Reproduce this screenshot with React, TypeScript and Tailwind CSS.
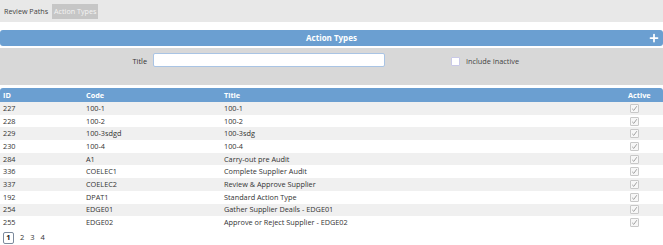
import { Plus } from 'lucide-react'

const rows = [
  { id: '227', code: '100-1', title: '100-1' },
  { id: '228', code: '100-2', title: '100-2' },
  { id: '229', code: '100-3sdgd', title: '100-3sdg' },
  { id: '230', code: '100-4', title: '100-4' },
  { id: '284', code: 'A1', title: 'Carry-out pre Audit' },
  { id: '336', code: 'COELEC1', title: 'Complete Supplier Audit' },
  { id: '337', code: 'COELEC2', title: 'Review & Approve Supplier' },
  { id: '192', code: 'DPAT1', title: 'Standard Action Type' },
  { id: '254', code: 'EDGE01', title: 'Gather Supplier Deails - EDGE01' },
  { id: '255', code: 'EDGE02', title: 'Approve or Reject Supplier - EDGE02' },
]

const CheckMark = () => (
  <div className="w-[9px] h-[9px] border border-[#c8c8c8] bg-[#f7f7f7] rounded-[1px] flex items-center justify-center">
    <svg width="7" height="7" viewBox="0 0 7 7">
      <path d="M1.2 3.8 L2.8 5.4 L5.8 1.2" stroke="#9a9a9a" strokeWidth="0.9" fill="none" />
    </svg>
  </div>
)

export default function App() {
  return (
    <div className="w-[663px] h-[245px] bg-white text-[7.3px] text-[#333] overflow-hidden" style={{ fontFamily: '"Open Sans", "Noto Sans", sans-serif' }}>
      {/* Tabs */}
      <div className="h-[22px] bg-[#e8e8e8] flex items-start pt-[4px] pl-[4px] gap-[3px] text-[7.2px]">
        <div className="h-[15px] flex items-center text-[#444]">Review Paths</div>
        <div className="h-[15px] px-[2px] ml-[1px] flex items-center bg-[#c6c6c6] text-[#f4f4f4]">Action Types</div>
      </div>

      {/* Section header */}
      <div className="mt-[8px] h-[16px] bg-[#6b9fd1] rounded-[3px] relative flex items-center justify-center">
        <span className="text-white font-bold text-[8px]">Action Types</span>
        <Plus className="absolute right-[3px] top-[2px] text-white" size={12} strokeWidth={3.5} />
      </div>

      {/* Filter panel */}
      <div className="mt-[2px] h-[37px] bg-[#d8d8d8] flex items-start pt-[5px]">
        <div className="w-[153px] text-right pr-[6px] pt-[3px] text-[#333]">Title</div>
        <div className="w-[232px] h-[14px] bg-white border border-[#a9c4e4] rounded-[2px]" />
        <div className="ml-[66px] mt-[3px] flex items-center">
          <div className="w-[9px] h-[9px] bg-white border border-[#c9c9e8] rounded-[1px]" />
          <span className="ml-[6px] text-[#444]">Include Inactive</span>
        </div>
      </div>

      {/* Table */}
      <div className="mt-[3px]">
        <div className="h-[14px] bg-[#6b9fd1] rounded-t-[3px] flex items-center text-white font-bold">
          <div className="w-[86px] pl-[3px]">ID</div>
          <div className="w-[138px]">Code</div>
          <div className="flex-1">Title</div>
          <div className="w-[35px]">Active</div>
        </div>
        {rows.map((r, i) => (
          <div key={r.id} className={`h-[12.7px] flex items-center ${i % 2 === 0 ? 'bg-[#f0f0f0]' : 'bg-white'}`}>
            <div className="w-[86px] pl-[3px]">{r.id}</div>
            <div className="w-[138px]">{r.code}</div>
            <div className="flex-1">{r.title}</div>
            <div className="w-[35px] pl-[2px]">
              <CheckMark />
            </div>
          </div>
        ))}
      </div>

      {/* Pager */}
      <div className="mt-[3px] ml-[3px] flex items-center gap-[6px] text-[#333] text-[7.5px]">
        <div className="w-[11px] h-[12px] border border-[#7c8a9c] rounded-[2px] flex items-center justify-center font-bold text-[#222]">1</div>
        <span>2</span>
        <span>3</span>
        <span>4</span>
      </div>
    </div>
  )
}
